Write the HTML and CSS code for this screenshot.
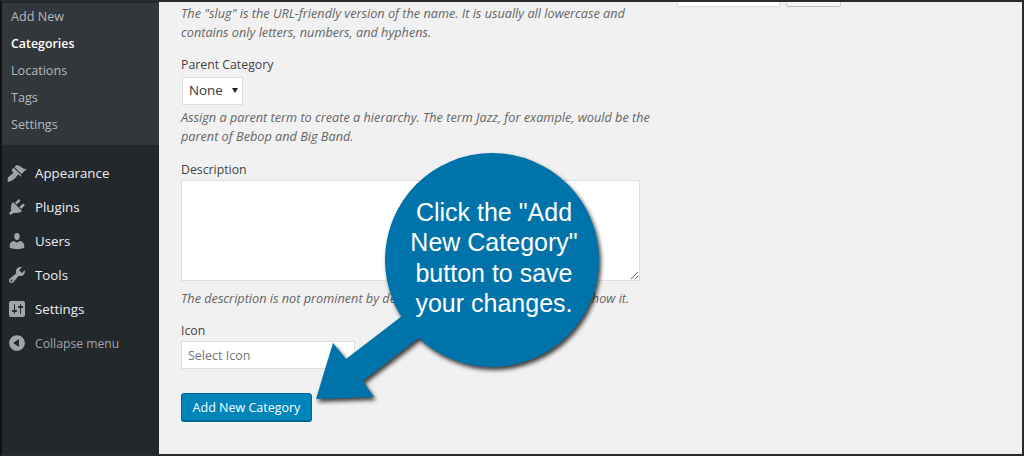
FILE: index.html
```html
<!DOCTYPE html>
<html lang="en">
<head>
    <meta charset="UTF-8">
    <meta name="viewport" content="width=device-width, initial-scale=1.0">
    <title>Add New Category</title>
    <link rel="stylesheet" href="styles.css">
</head>
<body>
    <div class="frame">
        <nav class="sidebar">
            <ul class="submenu">
                <li>Add New</li>
                <li class="current">Categories</li>
                <li>Locations</li>
                <li>Tags</li>
                <li>Settings</li>
            </ul>
            <ul class="menu">
                <li>
                    <svg class="icon" viewBox="0 0 20 20"><path d="M14.48 11.06L7.41 3.99l1.5-1.5c.5-.56 2.3-.47 3.51.32 1.21.8 1.43 1.28 2.91 2.1 1.18.64 2.45 1.26 4.45.85zm-.71.71L6.7 4.7 4.93 6.47c-.39.39-.39 1.02 0 1.41l1.06 1.06c.39.39.39 1.03 0 1.42-.6.6-1.43 1.11-2.21 1.69-.35.26-.7.53-1.01.84C1.43 13.23 0 16 1 19c3-1 5.77-2.43 7.12-3.78.31-.31.58-.66.84-1.01.58-.78 1.09-1.61 1.69-2.21.39-.39 1.03-.39 1.42 0l1.06 1.06c.39.39 1.02.39 1.41 0z"/></svg>
                    Appearance
                </li>
                <li>
                    <svg class="icon" viewBox="0 0 20 20"><path d="M13.11 4.36L9.87 7.6 8 5.73l3.24-3.24c.35-.34 1.05-.2 1.56.32.52.51.66 1.21.31 1.55zm-8 1.77l.91-1.12 9.01 9.01-1.19.84c-.71.71-2.63 1.16-3.82 1.16H6.14L4.9 17.26c-.59.59-1.54.59-2.12 0-.59-.58-.59-1.53 0-2.12l1.24-1.24v-3.88c0-1.13.4-3.19 1.09-3.89zm7.26 3.97l3.24-3.24c.34-.35 1.04-.21 1.55.31.52.51.66 1.21.31 1.55l-3.24 3.25z"/></svg>
                    Plugins
                </li>
                <li>
                    <svg class="icon" viewBox="0 0 20 20"><path d="M10 9.25c-2.27 0-2.73-3.44-2.73-3.44C7 4.02 7.82 2 9.97 2c2.16 0 2.98 2.02 2.71 3.81 0 0-.41 3.44-2.68 3.44zm0 2.57L12.72 10c2.39 0 4.52 2.33 4.52 4.53v2.49s-3.65 1.13-7.24 1.13c-3.65 0-7.24-1.13-7.24-1.13v-2.49c0-2.25 1.94-4.48 4.47-4.48z"/></svg>
                    Users
                </li>
                <li>
                    <svg class="icon" viewBox="0 0 20 20"><path d="M16.68 9.77c-1.34 1.34-3.3 1.67-4.95.99l-5.41 6.52c-.99.99-2.59.99-3.58 0s-.99-2.59 0-3.57l6.52-5.42c-.68-1.65-.35-3.61.99-4.95 1.28-1.28 3.12-1.62 4.72-1.06l-2.89 2.89 2.82 2.82 2.86-2.87c.53 1.58.18 3.39-1.08 4.65zM3.81 16.21c.4.39 1.04.39 1.43 0 .4-.4.4-1.04 0-1.43-.39-.4-1.03-.4-1.43 0-.39.39-.39 1.03 0 1.43z"/></svg>
                    Tools
                </li>
                <li>
                    <svg class="icon" viewBox="0 0 20 20"><path d="M18 16V4c0-1.1-.9-2-2-2H4c-1.1 0-2 .9-2 2v12c0 1.1.9 2 2 2h12c1.1 0 2-.9 2-2zM8 11h1c.55 0 1 .45 1 1s-.45 1-1 1H8v1.5c0 .28-.22.5-.5.5s-.5-.22-.5-.5V13H6c-.55 0-1-.45-1-1s.45-1 1-1h1V5.5c0-.28.22-.5.5-.5s.5.22.5.5V11zm5-2h-1c-.55 0-1-.45-1-1s.45-1 1-1h1V5.5c0-.28.22-.5.5-.5s.5.22.5.5V7h1c.55 0 1 .45 1 1s-.45 1-1 1h-1v5.5c0 .28-.22.5-.5.5s-.5-.22-.5-.5V9z"/></svg>
                    Settings
                </li>
                <li class="collapse">
                    <svg class="icon" viewBox="0 0 20 20"><path d="M10 2.16c4.33 0 7.84 3.51 7.84 7.84s-3.51 7.84-7.84 7.84S2.16 14.33 2.16 10 5.71 2.16 10 2.16zm2 11.72V6.12L6.18 9.97z"/></svg>
                    Collapse menu
                </li>
            </ul>
        </nav>

        <main class="content">
            <form class="term-form">
                <p class="hint">The "slug" is the URL-friendly version of the name. It is usually all lowercase and contains only letters, numbers, and hyphens.</p>

                <label class="parent-label">Parent Category</label>
                <div class="select-wrap">
                    <select class="parent-select"><option>None</option></select>
                </div>
                <p class="hint">Assign a parent term to create a hierarchy. The term Jazz, for example, would be the parent of Bebop and Big Band.</p>

                <label class="desc-label">Description</label>
                <textarea class="desc-input"></textarea>
                <p class="hint desc-hint">The description is not prominent by default; however, some themes may show it.</p>

                <label class="icon-label">Icon</label>
                <input type="text" class="icon-input" placeholder="Select Icon">

                <button type="button" class="submit">Add New Category</button>
            </form>

            <div class="search-stub">
                <span class="search-input"></span>
                <span class="search-button"></span>
            </div>
        </main>
    </div>

    <!-- annotation drawn over the screenshot -->
    <div class="callout">
        <svg class="callout-shape" width="1024" height="456" viewBox="0 0 1024 456">
            <circle cx="492" cy="260" r="107"/>
            <polygon points="316,399 333,343 346,359 402,316 420,337 363,381 374,397"/>
        </svg>
        <p class="callout-text">Click the "Add<br>New Category"<br>button to save<br>your changes.</p>
    </div>
</body>
</html>
```

FILE: styles.css
```css
html, body {
    margin: 0;
    padding: 0;
}

body {
    position: relative;
    width: 1024px;
    height: 456px;
    overflow: hidden;
    font-family: "Open Sans", sans-serif;
    font-size: 12.6px;
    color: #444;
    background-color: #f1f1f1;
}

.frame {
    display: flex;
    box-sizing: border-box;
    width: 1024px;
    height: 456px;
    border: 2px solid #2a2a2a;
    border-left-color: #111;
    overflow: hidden;
}

/* Sidebar */
.sidebar {
    flex: 0 0 157px;
    background-color: #23282d;
}

.sidebar ul {
    list-style: none;
    margin: 0;
    padding: 0;
}

.submenu {
    background-color: #32373c;
    padding-bottom: 7px !important;
}

.submenu li {
    height: 27px;
    line-height: 27px;
    padding-left: 9px;
    color: #b4b9be;
}

.submenu li:first-child {
    margin-top: 1px;
}

.submenu .current {
    color: #fff;
    font-weight: 600;
    font-size: 12.4px;
}

.menu {
    padding-top: 11px !important;
}

.menu li {
    display: flex;
    align-items: center;
    gap: 8px;
    height: 34px;
    padding-left: 5px;
    padding-bottom: 1px;
    box-sizing: border-box;
    font-size: 13.3px;
    color: #eee;
}

.menu .icon {
    flex: 0 0 20px;
    width: 20px;
    height: 20px;
    fill: #a0a5aa;
}

.menu .collapse {
    padding-bottom: 0;
    font-size: 12.2px;
    color: #a0a5aa;
}

/* Form */
.content {
    flex: 1;
    display: flex;
    align-items: flex-start;
    padding-left: 22px;
}

.term-form {
    flex: 0 0 474px;
    padding-top: 2px;
}

.hint {
    margin: 0;
    font-size: 12.7px;
    font-style: italic;
    line-height: 18.5px;
    color: #666;
}

label {
    display: block;
    font-size: 12.3px;
    line-height: 18px;
}

.parent-label {
    margin-top: 15px;
}

.select-wrap {
    position: relative;
    width: 61px;
    margin: 3px 0 3px 1px;
}

.select-wrap::after {
    content: "";
    position: absolute;
    right: 5px;
    top: 11px;
    border-style: solid;
    border-width: 5px 3px 0;
    border-color: #222 transparent transparent;
    pointer-events: none;
}

.parent-select {
    display: block;
    appearance: none;
    box-sizing: border-box;
    width: 61px;
    height: 28px;
    padding: 0 0 2px 6px;
    border: 1px solid #ddd;
    background-color: #fff;
    font-family: inherit;
    font-size: 13.3px;
    color: #32373c;
    border-radius: 0;
}

.desc-label {
    margin-top: 16px;
}

.desc-input {
    display: block;
    box-sizing: border-box;
    width: 459px;
    height: 101px;
    margin: 1px 0 0;
    border: 1px solid #ddd;
    background-color: #fff;
}

.desc-hint {
    margin-top: 8px;
}

.icon-label {
    margin-top: 14px;
}

.icon-input {
    display: block;
    box-sizing: border-box;
    width: 174px;
    height: 28px;
    margin-top: 1px;
    padding: 1px 6px 0;
    border: 1px solid #ddd;
    background-color: #fff;
    font-family: inherit;
    font-size: 12.5px;
}

.icon-input::placeholder {
    color: #72777c;
    opacity: 1;
}

.submit {
    display: block;
    box-sizing: border-box;
    width: 131px;
    height: 28px;
    margin-top: 24px;
    padding: 1px 0 0;
    border: 1px solid #006799;
    border-radius: 3px;
    background-color: #0085ba;
    box-shadow: 0 1px 0 #006799;
    font-family: inherit;
    font-size: 12.5px;
    color: #fff;
}

/* Bottom edge of the search box cut off by the top of the page */
.search-stub {
    display: flex;
    gap: 6px;
    margin-left: 22px;
}

.search-input {
    display: block;
    box-sizing: border-box;
    width: 103px;
    height: 5px;
    border: 1px solid #ddd;
    border-top: none;
    background-color: #fff;
}

.search-button {
    display: block;
    box-sizing: border-box;
    width: 55px;
    height: 5px;
    border: 1px solid #ccc;
    border-top: none;
    border-bottom-color: #bbb;
    border-radius: 0 0 3px 3px;
    background-color: #f7f7f7;
}

/* Callout */
.callout {
    position: absolute;
    left: 0;
    top: 0;
}

.callout-shape {
    display: block;
    fill: #0073aa;
    filter: drop-shadow(2px 3px 2px rgba(0, 0, 0, 0.75));
}

.callout-text {
    position: absolute;
    left: 395px;
    top: 197px;
    width: 198px;
    margin: 0;
    font-family: "Liberation Sans", Arial, sans-serif;
    font-size: 25px;
    line-height: 30.3px;
    text-align: center;
    color: #fff;
}
```
